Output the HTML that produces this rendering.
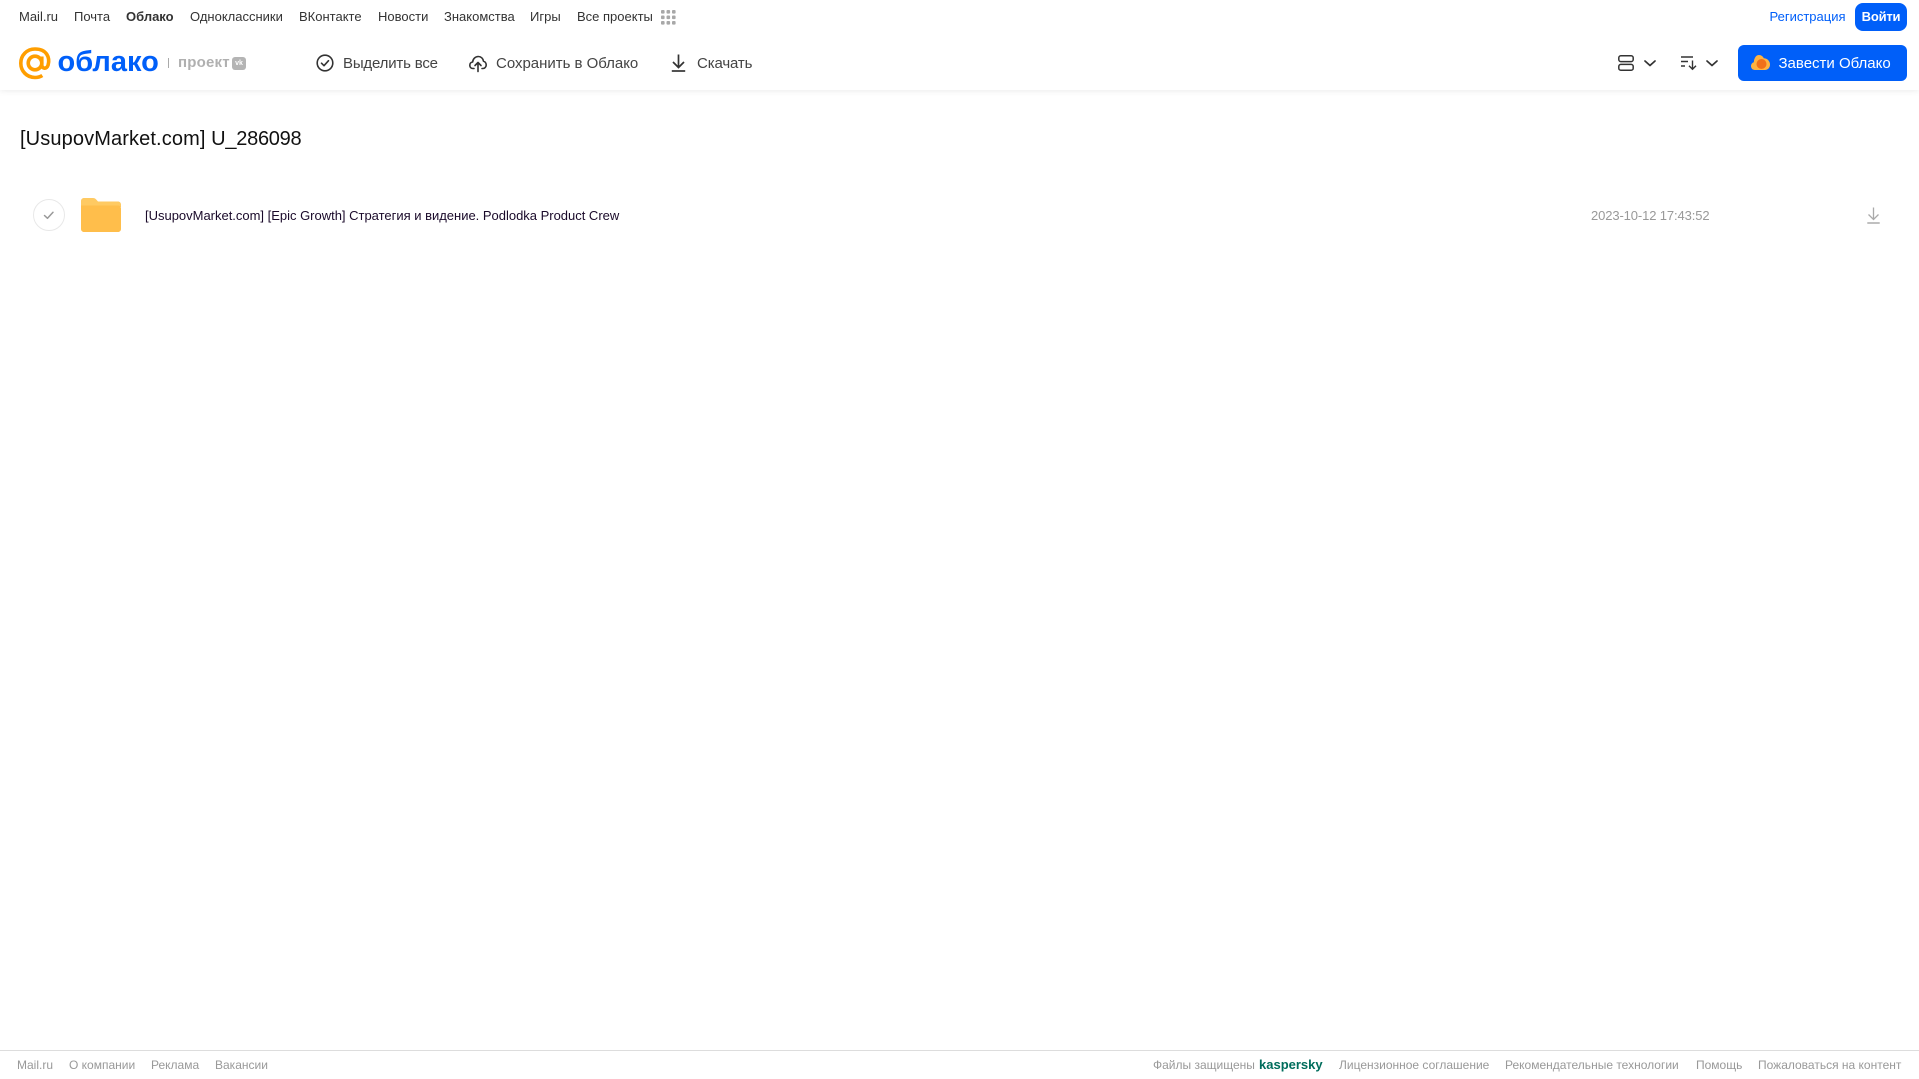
<!DOCTYPE html>
<html lang="ru">
<head>
<meta charset="utf-8">
<title>Облако</title>
<style>
html,body{margin:0;padding:0;width:1919px;height:1079px;overflow:hidden;background:#fff;font-family:"Liberation Sans",Arial,sans-serif}
.t{position:absolute;white-space:nowrap;line-height:16px}
.n{font-size:13px;color:#333;top:9px}
.b{font-size:15px;color:#444;top:55.500px;line-height:16px}
.f{font-size:12px;color:#999;top:1057px}
svg{position:absolute;overflow:visible}
#hd{position:absolute;left:0;top:0;width:1919px;height:90px;background:#fff;box-shadow:0 1px 6px rgba(0,0,0,.08)}
</style>
</head>
<body>
<div id="hd"></div>

<span class="t n" style="left:19px">Mail.ru</span>
<span class="t n" style="left:74px">Почта</span>
<span class="t n" style="left:126px;font-weight:bold">Облако</span>
<span class="t n" style="left:190px">Одноклассники</span>
<span class="t n" style="left:299px">ВКонтакте</span>
<span class="t n" style="left:378px">Новости</span>
<span class="t n" style="left:444px">Знакомства</span>
<span class="t n" style="left:530px">Игры</span>
<span class="t n" style="left:577px">Все проекты</span>
<svg style="left:661px;top:10px" width="15" height="15" fill="#a8a8a8">
<rect x="0" y="0" width="3.6" height="3.6" rx="1"/><rect x="5.500" y="0" width="3.6" height="3.6" rx="1"/><rect x="11" y="0" width="3.6" height="3.6" rx="1"/>
<rect x="0" y="5.500" width="3.6" height="3.6" rx="1"/><rect x="5.500" y="5.500" width="3.6" height="3.6" rx="1"/><rect x="11" y="5.500" width="3.6" height="3.6" rx="1"/>
<rect x="0" y="11" width="3.6" height="3.6" rx="1"/><rect x="5.500" y="11" width="3.6" height="3.6" rx="1"/><rect x="11" y="11" width="3.6" height="3.6" rx="1"/>
</svg>

<span class="t" style="left:1769.500px;top:9px;font-size:13px;color:#005ff9">Регистрация</span>
<div style="position:absolute;left:1855px;top:3px;width:52px;height:28px;border-radius:8px;background:#005ff9;color:#fff;font-size:13px;font-weight:bold;line-height:27px;text-align:center;letter-spacing:-.2px">Войти</div>

<!-- logo -->
<svg style="left:19px;top:47px" width="33" height="33" viewBox="0 0 33 33" fill="none" stroke="#ff9e00" stroke-width="3.600">
<circle cx="16" cy="16" r="6.800"/>
<path d="M22.800 9.500v8.500c0 4 5 4.500 6.300 0 2-7-1-16-13.100-16C7.800 2 1.800 8.300 1.800 16.200S7.800 30.500 16 30.500c3 0 5.300-.7 7.300-2"/>
</svg>
<span class="t" style="left:57.500px;top:44px;font-size:29px;line-height:36px;color:#005ff9;font-weight:bold">облако</span>
<div style="position:absolute;left:168px;top:58px;width:1px;height:10px;background:#aaa"></div>
<span class="t" style="left:178px;top:55px;font-size:15px;font-weight:bold;color:#b0b0b0;letter-spacing:.2px">проект</span>
<div style="position:absolute;left:232px;top:57px;width:14px;height:13px;border-radius:3px;background:#b4b4b4;color:#fff;font-size:7px;font-weight:bold;line-height:13px;text-align:center">vk</div>

<!-- toolbar -->
<svg style="left:316px;top:54px" width="18" height="18" viewBox="0 0 18 18" fill="none" stroke="#333" stroke-width="1.600">
<circle cx="9" cy="9" r="7.800"/><path d="M5.500 9.200l2.500 2.500 4.500-5" stroke-linecap="round" stroke-linejoin="round"/>
</svg>
<span class="t b" style="left:343px;letter-spacing:-.18px">Выделить все</span>

<svg style="left:469px;top:54px" width="18" height="18" viewBox="0 0 18 18" fill="none" stroke="#333" stroke-width="1.600" stroke-linecap="round" stroke-linejoin="round">
<path d="M5 14.500H4C2 14.500 .8 13 .8 11.200 .8 9.500 2 8.300 3.600 8 4 4.800 6.300 2.500 9.300 2.500c2.700 0 4.800 2 5.200 4.700 1.600.4 2.700 2 2.700 3.800 0 2-1.500 3.500-3.200 3.500H13"/>
<path d="M9 17.500V9M6 11.500L9 8.500l3 3"/>
</svg>
<span class="t b" style="left:496px;letter-spacing:-.02px">Сохранить в Облако</span>

<svg style="left:671px;top:54px" width="15" height="18" viewBox="0 0 15 18" fill="none" stroke="#333" stroke-width="1.700">
<path d="M7.500 .5V13M2 8l5.500 5.500L13 8"/><path d="M.8 17h13.400"/>
</svg>
<span class="t b" style="left:697px;letter-spacing:-.13px">Скачать</span>

<!-- view / sort -->
<svg style="left:1618px;top:55px" width="16" height="16" viewBox="0 0 16 16" fill="none" stroke="#333" stroke-width="1.500">
<rect x=".8" y=".8" width="14.400" height="5.800" rx="2"/><rect x=".8" y="9.400" width="14.400" height="5.800" rx="2"/>
</svg>
<svg style="left:1644px;top:60px" width="12" height="7" viewBox="0 0 12 7" fill="none" stroke="#333" stroke-width="1.700" stroke-linecap="round" stroke-linejoin="round"><path d="M1 1l5 4.500L11 1"/></svg>
<svg style="left:1681px;top:56px" width="16" height="14" viewBox="0 0 16 14" fill="none" stroke="#333" stroke-width="1.400">
<path d="M0 1h12M0 5.500h7M0 10h4"/><path d="M11.500 4.500V13M8 9.700l3.500 3.500L15 9.700"/>
</svg>
<svg style="left:1706px;top:60px" width="12" height="7" viewBox="0 0 12 7" fill="none" stroke="#333" stroke-width="1.700" stroke-linecap="round" stroke-linejoin="round"><path d="M1 1l5 4.500L11 1"/></svg>

<div style="position:absolute;left:1738px;top:45px;width:169px;height:36px;border-radius:6px;background:#005ff9"></div>
<svg style="left:1751px;top:54px" width="19" height="17" viewBox="0 0 19 17">
<path d="M4 16C1.500 16 0 14.200 0 12c0-1.800 1.100-3.300 2.800-3.800C3.200 4 5 1 8 1c2.400 0 4 1.500 4.800 3.300C16 4.300 19 7 19 10.500S16.500 16 14 16z" fill="#ffb340"/>
<circle cx="10.500" cy="10" r="5" fill="#f0701a"/>
</svg>
<span class="t" style="left:1778.500px;top:55.500px;font-size:15px;color:#fff">Завести Облако</span>

<!-- title -->
<span class="t" style="left:20px;top:127px;font-size:20px;line-height:24px;color:#111"><span style="letter-spacing:.12px">[UsupovMarket.com]</span> <span style="letter-spacing:-.25px">U_286098</span></span>

<!-- row -->
<svg style="left:33px;top:199px" width="32" height="32" viewBox="0 0 32 32" fill="none">
<circle cx="16" cy="16" r="15.500" stroke="#e8e8e8"/>
<path d="M11.500 16.500l3 2.800 5.500-6" stroke="#999" stroke-width="1.500" stroke-linecap="round" stroke-linejoin="round"/>
</svg>
<svg style="left:81px;top:198px" width="40" height="34" viewBox="0 0 40 34">
<path d="M0 3C0 1.300 1.300 0 3 0h9c1.500 0 2.300.5 3.200 1.500L17 3.500h20c1.700 0 3 1.300 3 3V9H0z" fill="#ffca62"/>
<path d="M0 7.500h37c1.700 0 3 1.300 3 3V31c0 1.700-1.300 3-3 3H3c-1.700 0-3-1.300-3-3z" fill="#ffbe4b"/>
</svg>
<span class="t" style="left:145px;top:208px;font-size:13px;color:#1a0a2a;letter-spacing:-.01px">[UsupovMarket.com] [Epic Growth] Стратегия и видение. Podlodka Product Crew</span>
<span class="t" style="left:1591px;top:208px;font-size:13px;color:#999;letter-spacing:-.12px">2023-10-12 17:43:52</span>
<svg style="left:1866.500px;top:207px" width="13" height="17" viewBox="0 0 13 17" fill="none" stroke="#aaa" stroke-width="1.300">
<path d="M6.500 .5V12M1.500 7.500l5 5 5-5"/><path d="M.3 16h12.400" stroke-width="1.500"/>
</svg>

<!-- footer -->
<div style="position:absolute;left:0;top:1050px;width:1919px;height:1px;background:#ddd"></div>
<span class="t f" style="left:17px">Mail.ru</span>
<span class="t f" style="left:69px">О компании</span>
<span class="t f" style="left:151px">Реклама</span>
<span class="t f" style="left:215px">Вакансии</span>
<span class="t f" style="left:1153px">Файлы защищены</span>
<span class="t f" style="left:1259px;font-size:13px;font-weight:bold;color:#006d5c">kaspersky</span>
<span class="t f" style="left:1339px">Лицензионное соглашение</span>
<span class="t f" style="left:1505px">Рекомендательные технологии</span>
<span class="t f" style="left:1696px">Помощь</span>
<span class="t f" style="left:1758px">Пожаловаться на контент</span>
</body>
</html>
